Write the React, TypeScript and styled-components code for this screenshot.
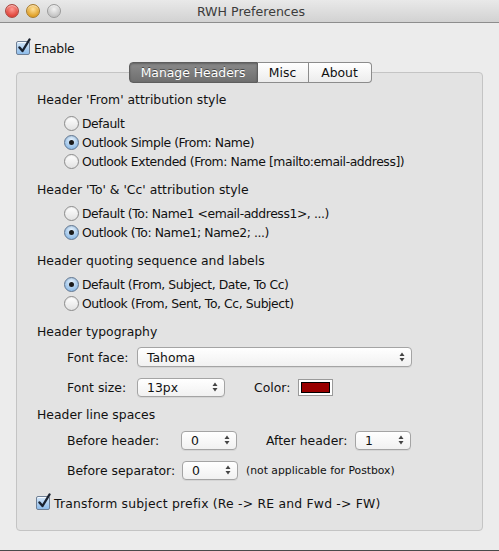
import React, { useState } from "react";
import styled, { createGlobalStyle, css } from "styled-components";

const GlobalStyle = createGlobalStyle`
  html, body {
    margin: 0;
    padding: 0;
    background: #ececec;
  }
  body {
    font-family: "DejaVu Sans", "Noto Sans", sans-serif;
    font-size: 12.4px;
    color: #111;
  }
`;

const Window = styled.div`
  width: 499px;
  height: 551px;
  box-sizing: border-box;
  background: #ececec;
  border-bottom: 1px solid #4a4a4a;
  display: flex;
  flex-direction: column;
`;

const TitleBar = styled.div`
  height: 22px;
  flex: none;
  display: flex;
  align-items: center;
  background: linear-gradient(#e9e9e9, #d2d2d2);
  border-bottom: 1px solid #8d8d8d;
`;

const TrafficLights = styled.div`
  display: flex;
  gap: 7px;
  padding-left: 5px;
`;

const Light = styled.span<{ $from: string; $to: string; $edge: string }>`
  width: 12px;
  height: 12px;
  border-radius: 50%;
  border: 1px solid ${(p) => p.$edge};
  background: radial-gradient(circle at 50% 35%, ${(p) => p.$from}, ${(p) => p.$to} 70%);
  box-shadow: inset 0 1px 1px rgba(255, 255, 255, 0.6);
`;

const Title = styled.div`
  flex: 1;
  text-align: center;
  margin-right: 58px;
  font-size: 12.6px;
  color: #3c3c3c;
`;

const Content = styled.div`
  flex: 1;
  display: flex;
  flex-direction: column;
  padding: 15px 16px 0 16px;
`;

const CheckRow = styled.label<{ $indent?: number; $spacing?: number }>`
  display: flex;
  align-items: center;
  gap: 4px;
  height: 20px;
  margin-left: ${(p) => p.$indent ?? 0}px;
  letter-spacing: ${(p) => p.$spacing ?? 0}px;
  cursor: default;
`;

const CheckBox = styled.span`
  position: relative;
  width: 12px;
  height: 12px;
  border: 1px solid #6e7f95;
  border-radius: 2px;
  background: linear-gradient(#d3e6f8, #8ebcea);
  box-shadow: inset 0 1px 0 rgba(255, 255, 255, 0.8);
  flex: none;

  svg {
    position: absolute;
    left: 0;
    top: -4px;
  }
`;

const TabBox = styled.div`
  margin-top: 4px;
  display: flex;
  flex-direction: column;
`;

const SegmentBar = styled.div`
  display: flex;
  justify-content: center;
  position: relative;
  z-index: 1;
  margin-bottom: -11px;
  margin-left: 1px;
`;

const Segment = styled.button<{ $active?: boolean; $width: number }>`
  width: ${(p) => p.$width}px;
  height: 21px;
  padding: 0;
  font: inherit;
  font-size: 12.4px;
  border: 1px solid #8c8c8c;
  border-left-width: 0;
  background: linear-gradient(#ffffff, #ececec);
  color: #111;
  cursor: default;

  &:first-child {
    border-left-width: 1px;
    border-radius: 4px 0 0 4px;
  }
  &:last-child {
    border-radius: 0 4px 4px 0;
  }

  ${(p) =>
    p.$active &&
    css`
      background: linear-gradient(#8a8a8a, #6f6f6f);
      border-color: #5e5e5e;
      color: #fff;
      text-shadow: 0 -1px 0 rgba(0, 0, 0, 0.45);
      box-shadow: inset 0 1px 2px rgba(0, 0, 0, 0.3);
    `}
`;

const Panel = styled.div`
  height: 459px;
  box-sizing: border-box;
  border: 1px solid #c4c4c4;
  border-radius: 4px;
  background: #e3e3e3;
  padding: 17px 0 0 20px;
  display: flex;
  flex-direction: column;
`;

const Section = styled.div<{ $after?: number }>`
  display: flex;
  flex-direction: column;
  margin-bottom: ${(p) => p.$after ?? 9}px;
`;

const Heading = styled.div`
  height: 20px;
  line-height: 20px;
`;

const OptionList = styled.div<{ $top?: number; $gap?: number; $indent?: number }>`
  display: flex;
  flex-direction: column;
  gap: ${(p) => p.$gap ?? 0}px;
  margin-top: ${(p) => p.$top ?? 4}px;
  padding-left: ${(p) => p.$indent ?? 27}px;
`;

const RadioRow = styled.label`
  display: flex;
  align-items: center;
  gap: 3px;
  height: 19px;
  letter-spacing: -0.42px;
  cursor: default;
`;

const Radio = styled.span<{ $checked?: boolean }>`
  width: 13px;
  height: 13px;
  border-radius: 50%;
  border: 1px solid #8b8b8b;
  flex: none;
  display: flex;
  align-items: center;
  justify-content: center;
  background: linear-gradient(#ffffff, #e2e2e2);
  box-shadow: inset 0 1px 1px rgba(0, 0, 0, 0.08);

  ${(p) =>
    p.$checked &&
    css`
      border-color: #5f7590;
      background: radial-gradient(circle at 50% 30%, #e4f0fb, #8fbbe6 80%);

      &::after {
        content: "";
        width: 5px;
        height: 5px;
        border-radius: 50%;
        background: #1b1b1b;
      }
    `}
`;

const FieldRow = styled.div`
  display: flex;
  align-items: center;
  height: 22px;
`;

const FieldLabel = styled.span<{ $width: number; $left?: number }>`
  width: ${(p) => p.$width}px;
  margin-left: ${(p) => p.$left ?? 0}px;
  flex: none;
`;

const PopUp = styled.div<{ $width: number; $height?: number }>`
  width: ${(p) => p.$width}px;
  height: ${(p) => p.$height ?? 19}px;
  box-sizing: border-box;
  border: 1px solid #a4a4a4;
  border-radius: 4px;
  background: linear-gradient(#ffffff, #f1f1f1);
  box-shadow: 0 1px 0 rgba(0, 0, 0, 0.06);
  display: flex;
  align-items: center;
  justify-content: space-between;
  padding: 0 6px 0 9px;
  flex: none;
`;

const Arrows = () => (
  <svg width="6" height="10" viewBox="0 0 6 10">
    <path d="M3 0.5 L5.5 4 L0.5 4 Z" fill="#444" />
    <path d="M3 9.5 L5.5 6 L0.5 6 Z" fill="#444" />
  </svg>
);

const Swatch = styled.span<{ $color: string }>`
  width: 35px;
  height: 17px;
  box-sizing: border-box;
  border: 1px solid #9a9a9a;
  background: #fff;
  padding: 2px;
  display: flex;
  margin-left: 4px;

  &::after {
    content: "";
    flex: 1;
    border: 1px solid #000;
    background: ${(p) => p.$color};
  }
`;

const Note = styled.span`
  font-size: 10.8px;
  margin-left: 8px;
`;

const CheckMark = () => (
  <svg width="15" height="16" viewBox="0 0 15 16">
    <path
      d="M2.5 9.5 L5.5 13 L12.5 1.5"
      fill="none"
      stroke="#1a2230"
      strokeWidth="2.4"
      strokeLinecap="round"
      strokeLinejoin="round"
    />
  </svg>
);

type Option = { label: string };

const RadioGroup: React.FC<{ options: Option[]; value: number; onChange: (i: number) => void }> = ({
  options,
  value,
  onChange,
}) => (
  <OptionList>
    {options.map((o, i) => (
      <RadioRow key={o.label} onClick={() => onChange(i)}>
        <Radio $checked={value === i} />
        {o.label}
      </RadioRow>
    ))}
  </OptionList>
);

const fromOptions: Option[] = [
  { label: "Default" },
  { label: "Outlook Simple (From: Name)" },
  { label: "Outlook Extended (From: Name [mailto:email-address])" },
];

const toOptions: Option[] = [
  { label: "Default (To: Name1 <email-address1>, ...)" },
  { label: "Outlook (To: Name1; Name2; ...)" },
];

const quoteOptions: Option[] = [
  { label: "Default (From, Subject, Date, To Cc)" },
  { label: "Outlook (From, Sent, To, Cc, Subject)" },
];

const tabs = [
  { label: "Manage Headers", width: 129 },
  { label: "Misc", width: 51 },
  { label: "About", width: 63 },
];

const App: React.FC = () => {
  const [tab, setTab] = useState(0);
  const [fromStyle, setFromStyle] = useState(1);
  const [toStyle, setToStyle] = useState(1);
  const [quoteStyle, setQuoteStyle] = useState(0);

  return (
    <>
      <GlobalStyle />
      <Window>
        <TitleBar>
          <TrafficLights>
            <Light $from="#ff9c95" $to="#e0453b" $edge="#a8463f" />
            <Light $from="#ffe19a" $to="#e0a129" $edge="#a77b2a" />
            <Light $from="#f2f2f2" $to="#c4c4c4" $edge="#9a9a9a" />
          </TrafficLights>
          <Title>RWH Preferences</Title>
        </TitleBar>

        <Content>
          <CheckRow $spacing={-0.3}>
            <CheckBox>
              <CheckMark />
            </CheckBox>
            Enable
          </CheckRow>

          <TabBox>
            <SegmentBar>
              {tabs.map((t, i) => (
                <Segment key={t.label} $width={t.width} $active={tab === i} onClick={() => setTab(i)}>
                  {t.label}
                </Segment>
              ))}
            </SegmentBar>

            <Panel>
              <Section>
                <Heading>Header 'From' attribution style</Heading>
                <RadioGroup options={fromOptions} value={fromStyle} onChange={setFromStyle} />
              </Section>

              <Section>
                <Heading>Header 'To' &amp; 'Cc' attribution style</Heading>
                <RadioGroup options={toOptions} value={toStyle} onChange={setToStyle} />
              </Section>

              <Section>
                <Heading>Header quoting sequence and labels</Heading>
                <RadioGroup options={quoteOptions} value={quoteStyle} onChange={setQuoteStyle} />
              </Section>

              <Section $after={7}>
                <Heading>Header typography</Heading>
                <OptionList $top={4} $gap={8} $indent={30}>
                  <FieldRow>
                    <FieldLabel $width={70}>Font face:</FieldLabel>
                    <PopUp $width={275} $height={20}>
                      Tahoma
                      <Arrows />
                    </PopUp>
                  </FieldRow>
                  <FieldRow>
                    <FieldLabel $width={70}>Font size:</FieldLabel>
                    <PopUp $width={88}>
                      13px
                      <Arrows />
                    </PopUp>
                    <FieldLabel $width={40} $left={29}>
                      Color:
                    </FieldLabel>
                    <Swatch $color="#990000" />
                  </FieldRow>
                </OptionList>
              </Section>

              <Section $after={12}>
                <Heading>Header line spaces</Heading>
                <OptionList $top={4} $gap={8} $indent={30}>
                  <FieldRow>
                    <FieldLabel $width={114}>Before header:</FieldLabel>
                    <PopUp $width={56}>
                      0
                      <Arrows />
                    </PopUp>
                    <FieldLabel $width={89} $left={29}>
                      After header:
                    </FieldLabel>
                    <PopUp $width={56}>
                      1
                      <Arrows />
                    </PopUp>
                  </FieldRow>
                  <FieldRow>
                    <FieldLabel $width={115}>Before separator:</FieldLabel>
                    <PopUp $width={56}>
                      0
                      <Arrows />
                    </PopUp>
                    <Note>(not applicable for Postbox)</Note>
                  </FieldRow>
                </OptionList>
              </Section>

              <CheckRow $indent={-1} $spacing={0.2}>
                <CheckBox>
                  <CheckMark />
                </CheckBox>
                Transform subject prefix (Re -&gt; RE and Fwd -&gt; FW)
              </CheckRow>
            </Panel>
          </TabBox>
        </Content>
      </Window>
    </>
  );
};

export default App;
